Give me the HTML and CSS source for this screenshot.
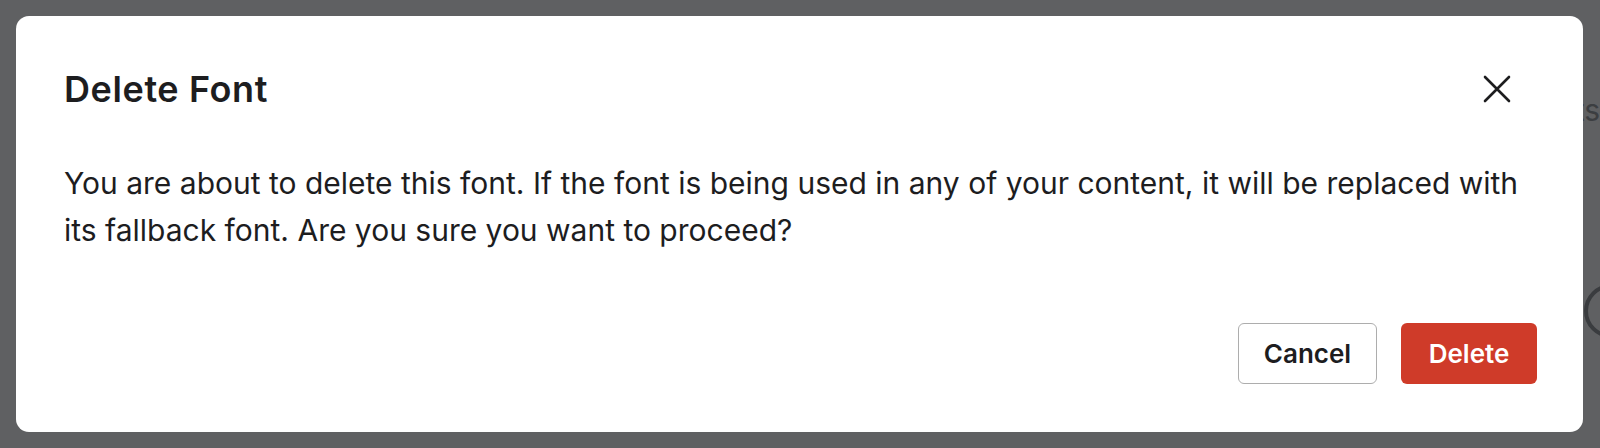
FILE: index.html
```html
<!DOCTYPE html>
<html>
	<head>
		<meta charset="utf-8"/>
		<meta name="viewport" content="width=device-width"/>
		<link rel="stylesheet" href="styles.css">
	</head>
	<body>
		<div class="page">
			<div class="page-top">
				<span class="page-tab">Fonts</span>
			</div>
			<div class="page-row">
				<span class="page-ring"></span>
			</div>
		</div>
		<div class="overlay">
			<div class="modal" role="dialog">
				<div class="modal-head">
					<h2>Delete Font</h2>
					<button class="close" aria-label="Close">
						<svg width="28" height="28" viewBox="0 0 28 28">
							<path d="M2 2 L26 26 M26 2 L2 26" stroke="#1d1d1f" stroke-width="2.6" stroke-linecap="round" fill="none"/>
						</svg>
					</button>
				</div>
				<p class="modal-text">You are about to delete this font. If the font is being used in any of your content, it will be replaced with its fallback font. Are you sure you want to proceed?</p>
				<div class="modal-foot">
					<button class="btn btn-cancel">Cancel</button>
					<button class="btn btn-delete">Delete</button>
				</div>
			</div>
		</div>
	</body>
</html>
```

FILE: styles.css
```css
body{
	margin:0;
	height:100vh;
	overflow:hidden;
	background-color:#5f6062;
	font-family:Inter,"Liberation Sans",sans-serif;
	color:#1d1d1f;
}

/* dimmed page behind the dialog */
.page{
	height:100%;
	display:flex;
	flex-direction:column;
	align-items:flex-end;
}
.page-top{
	padding-top:92px;
}
.page-tab{
	font-size:30px;
	color:#3c3e41;
}
.page-row{
	padding-top:156px;
	margin-right:-38px;
}
.page-ring{
	display:block;
	width:46px;
	height:46px;
	border:4px solid #3a3c3f;
	border-radius:50%;
}

.overlay{
	position:fixed;
	top:0;left:0;right:0;bottom:0;
	padding:16px 17px 16px 16px;
	display:flex;
}
.modal{
	flex-grow:1;
	background-color:#fff;
	border-radius:13px;
	padding:48px 46px 48px 48px;
	display:flex;
	flex-direction:column;
}
.modal-head{
	display:flex;
	justify-content:space-between;
	align-items:center;
	margin-top:5px;
}
.modal-head h2{
	margin:0;
	font-size:36px;
	font-weight:600;
	letter-spacing:0.6px;
	line-height:40px;
}
.close{
	border:0;
	background:none;
	padding:0;
	margin-right:26px;
	display:flex;
}
.modal-text{
	margin:51px 0 0;
	font-size:30px;
	line-height:47px;
	color:#1d1d1f;
}
.modal-foot{
	margin-top:auto;
	display:flex;
	justify-content:flex-end;
	gap:24px;
}
.btn{
	height:61px;
	border-radius:6px;
	font-family:inherit;
	font-size:26px;
	font-weight:600;
	padding:0 24px;
}
.btn-cancel{
	width:139px;
	background:#fff;
	border:1px solid #adadad;
	color:#1d1d1f;
}
.btn-delete{
	width:136px;
	background:#cf3b29;
	border:0;
	color:#fff;
}
```
